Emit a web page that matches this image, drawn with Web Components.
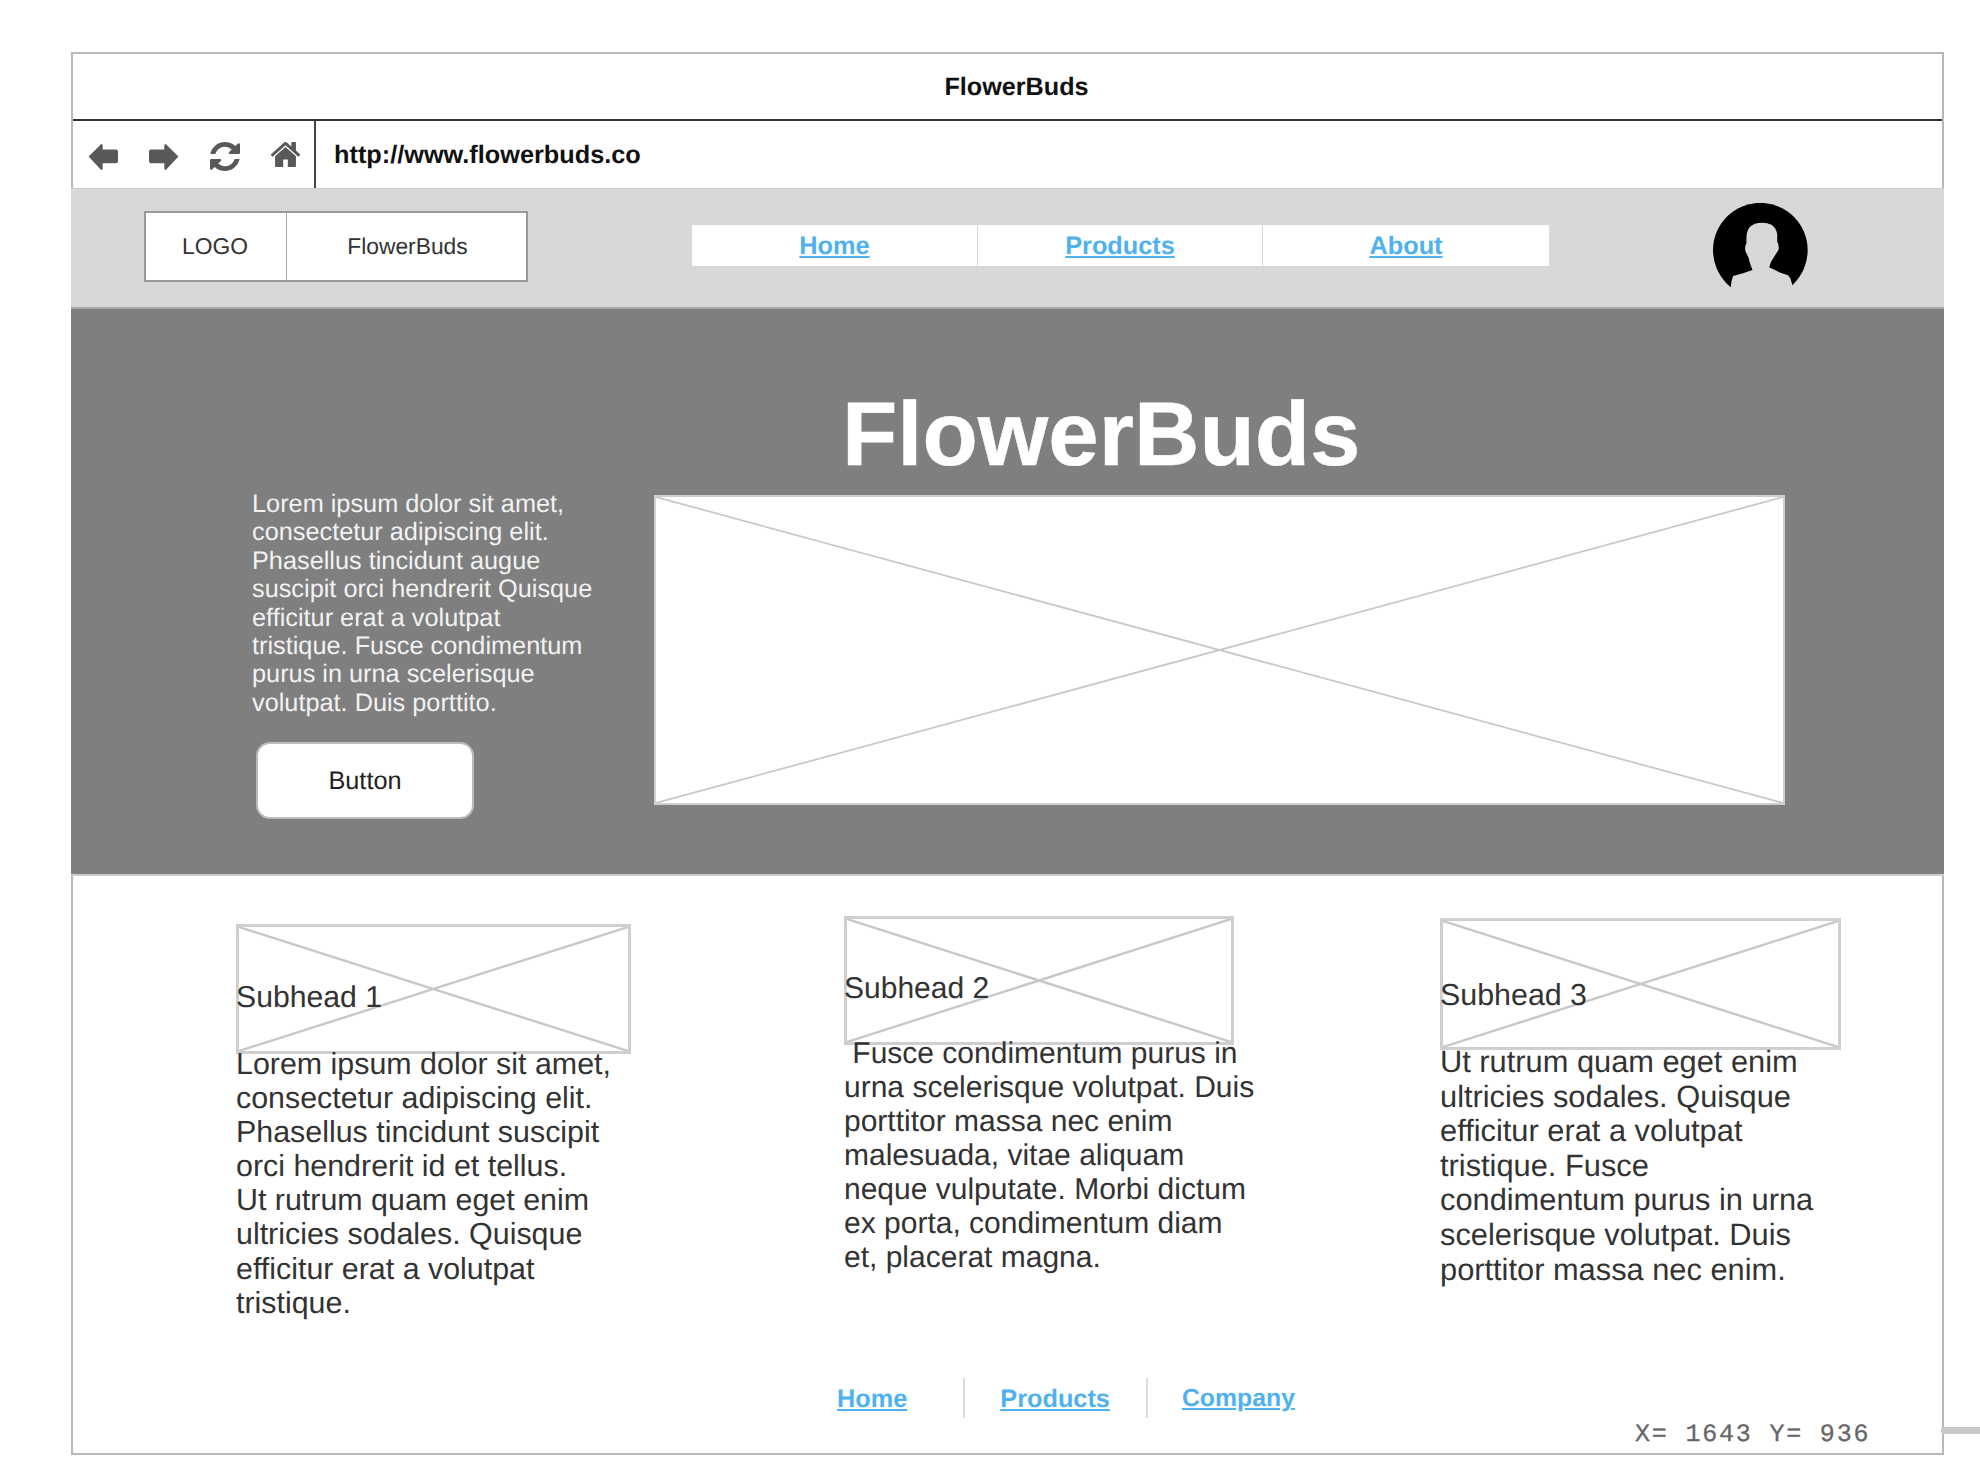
<!DOCTYPE html>
<html>
<head>
<meta charset="utf-8">
<title>FlowerBuds</title>
<style>
    html, body {
        margin: 0;
        padding: 0;
        background: #fff;
        font-family: "Liberation Sans", Arial, sans-serif;
        color: #333;
        text-rendering: geometricPrecision;
    }
    body {
        width: 1980px;
        height: 1470px;
        overflow: hidden;
    }
</style>
</head>
<body>
<browser-frame title-text="FlowerBuds" url="http://www.flowerbuds.co">
    <site-nav></site-nav>
    <hero-banner>
        Lorem ipsum dolor sit amet, consectetur adipiscing elit. Phasellus tincidunt augue suscipit orci hendrerit Quisque efficitur erat a volutpat tristique. Fusce condimentum purus in urna scelerisque volutpat. Duis porttito.
    </hero-banner>
    <card-row>
        <info-card heading="Subhead 1" style="--card-top:48px;--img-w:395px;--img-h:130px;--head-top:57px;--head-size:30.2px;--text-gap:-7px;--text-w:395px;--text-size:30.4px;--text-lh:34.1px">
            Lorem ipsum dolor sit amet, consectetur adipiscing elit. Phasellus tincidunt suscipit orci hendrerit id et tellus.<br>Ut rutrum quam eget enim ultricies sodales. Quisque efficitur erat a volutpat tristique.
        </info-card>
        <info-card heading="Subhead 2" style="--card-top:40px;--img-w:390px;--img-h:129px;--head-top:56px;--head-size:30px;--text-gap:-8px;--text-w:416px;--text-size:30px;--text-lh:34px">
            &nbsp;Fusce condimentum purus in urna scelerisque volutpat. Duis porttitor massa nec enim malesuada, vitae aliquam neque vulputate. Morbi dictum ex porta, condimentum diam et, placerat magna.
        </info-card>
        <info-card heading="Subhead 3" style="--card-top:42px;--img-w:401px;--img-h:132px;--head-top:60px;--head-size:30.4px;--text-gap:-5px;--text-w:385px;--text-size:30.8px;--text-lh:34.6px">
            Ut rutrum quam eget enim ultricies sodales. Quisque efficitur erat a volutpat tristique. Fusce condimentum purus in urna scelerisque volutpat. Duis porttitor massa nec enim.
        </info-card>
    </card-row>
    <site-footer></site-footer>
</browser-frame>

<script>
const ICONS = {
    back: `<svg width="30" height="30" viewBox="0 0 30 30"><path d="M.6 14.6 12 3.2q2.5-2.6 2.7.6v3.6H28q2 0 2 2.2V19q0 2.2-2 2.2H14.7v5q-.2 3.2-2.7.6Z"/></svg>`,
    forward: `<svg width="30" height="30" viewBox="0 0 30 30"><path d="M29.4 14.6 18 3.2q-2.5-2.6-2.7.6v3.6H2q-2 0-2 2.2V19q0 2.2 2 2.2h13.3v5q.2 3.2 2.7.6Z"/></svg>`,
    refresh: `<svg width="30" height="29" viewBox="128 128 1536 1536" preserveAspectRatio="none"><path d="M1639 1056q0 5-1 7-64 268-268 434.5t-478 166.5q-146 0-282.5-55t-243.5-157l-129 129q-19 19-45 19t-45-19-19-45v-448q0-26 19-45t45-19h448q26 0 45 19t19 45-19 45l-137 137q71 66 161 102t187 36q134 0 250-65t186-179q11-17 53-117 8-23 30-23h192q13 0 22.5 9.5t9.5 22.5zm25-800v448q0 26-19 45t-45 19h-448q-26 0-45-19t-19-45 19-45l138-138q-148-137-349-137-134 0-250 65t-186 179q-11 17-53 117-8 23-30 23h-199q-13 0-22.5-9.5t-9.5-22.5v-7q65-268 270-434.5t480-166.5q146 0 284 55.5t245 156.5l130-129q19-19 45-19t45 19 19 45z"/></svg>`,
    home: `<svg width="29" height="25" viewBox="97 254 1598 1282" preserveAspectRatio="none"><path d="M1472 992v480q0 26-19 45t-45 19h-384v-384h-256v384h-384q-26 0-45-19t-19-45v-480q0-1 .5-3t.5-3l575-474 575 474q1 2 1 6zm223-69l-62 74q-8 9-21 11h-3q-13 0-21-7l-692-577-692 577q-12 8-24 7-13-2-21-11l-62-74q-8-10-7-23.5t11-21.5l719-599q32-26 76-26t76 26l244 204v-195q0-14 9-23t23-9h192q14 0 23 9t9 23v408l219 182q10 8 11 21.5t-7 23.5z"/></svg>`
};

class BrowserFrame extends HTMLElement {
    constructor() {
        super();
        this.attachShadow({ mode: 'open' });
    }

    connectedCallback() {
        this.shadowRoot.innerHTML = `
            <style>
                :host {
                    display: block;
                    box-sizing: border-box;
                    position: relative;
                    width: 1873px;
                    height: 1403px;
                    margin: 52px 0 0 71px;
                    border: 2px solid #b8b8b8;
                    background: #fff;
                }
                .title {
                    box-sizing: border-box;
                    height: 67px;
                    border-bottom: 2px solid #333;
                    padding: 1px 0 0 18px;
                    display: flex;
                    align-items: center;
                    justify-content: center;
                    font-size: 25.2px;
                    font-weight: bold;
                    color: #111;
                }
                .address {
                    height: 67px;
                    display: flex;
                }
                .tools {
                    box-sizing: border-box;
                    width: 243px;
                    border-right: 2px solid #444;
                    padding: 21px 0 0 15px;
                    display: flex;
                    align-items: flex-start;
                    gap: 31px;
                    fill: #595959;
                }
                .tools svg { display: block; }
                .url {
                    padding-left: 18px;
                    line-height: 69px;
                    font-size: 25.3px;
                    font-weight: bold;
                    color: #111;
                }
                .coords {
                    position: absolute;
                    left: 1562px;
                    top: 1366px;
                    font: 25px/30px "Liberation Mono", "Courier New", monospace;
                    letter-spacing: 1.8px;
                    -webkit-text-stroke: .3px #666;
                    white-space: pre;
                    color: #666;
                }
                .handle {
                    position: absolute;
                    left: 1868px;
                    top: 1373px;
                    width: 39px;
                    height: 7px;
                    border-radius: 3px 0 0 3px;
                    background: #c8c8c8;
                }
            </style>
            <div class="title">${this.getAttribute('title-text')}</div>
            <div class="address">
                <div class="tools">${ICONS.back}${ICONS.forward}${ICONS.refresh}${ICONS.home}</div>
                <div class="url">${this.getAttribute('url')}</div>
            </div>
            <slot></slot>
            <div class="coords">X= 1643 Y= 936</div>
            <div class="handle"></div>
        `;
    }
}

class WireImage extends HTMLElement {
    constructor() {
        super();
        this.attachShadow({ mode: 'open' });
        this.shadowRoot.innerHTML = `
            <style>
                :host {
                    display: block;
                    box-sizing: border-box;
                    border: var(--frame-w, 3px) solid #cfcfcf;
                    background: #fff;
                }
                svg {
                    display: block;
                    width: 100%;
                    height: 100%;
                }
                line {
                    stroke: #c8c8c8;
                    stroke-width: var(--line-w, 2.4);
                    vector-effect: non-scaling-stroke;
                }
            </style>
            <svg viewBox="0 0 100 100" preserveAspectRatio="none">
                <line x1="0" y1="0" x2="100" y2="100"></line>
                <line x1="100" y1="0" x2="0" y2="100"></line>
            </svg>
        `;
    }
}

class SiteNav extends HTMLElement {
    constructor() {
        super();
        this.attachShadow({ mode: 'open' });
        this.shadowRoot.innerHTML = `
            <style>
                :host {
                    display: flex;
                    align-items: flex-start;
                    box-sizing: border-box;
                    height: 121px;
                    margin: 0 -2px;
                    padding-left: 73px;
                    background: #d8d8d8;
                    border-top: 1px solid #ccc;
                    border-bottom: 2px solid #a8a8a8;
                }
                .logo {
                    box-sizing: border-box;
                    width: 384px;
                    height: 71px;
                    margin-top: 22px;
                    display: flex;
                    border: 2px solid #999;
                    background: #fff;
                    font-size: 22.8px;
                    color: #333;
                }
                .logo div {
                    display: flex;
                    align-items: center;
                    justify-content: center;
                }
                .logo .mark {
                    box-sizing: border-box;
                    width: 141px;
                    padding-right: 2px;
                    border-right: 1px solid #aaa;
                }
                .logo .name {
                    flex: 1;
                    padding-left: 2px;
                }
                .menu {
                    width: 857px;
                    height: 41px;
                    margin: 36px 0 0 164px;
                    display: grid;
                    grid-template-columns: 285px 285px 1fr;
                    background: #fff;
                    font-size: 25.3px;
                    font-weight: bold;
                }
                .menu a {
                    display: flex;
                    align-items: center;
                    justify-content: center;
                    padding-top: 1px;
                    color: #4fb1ee;
                    border-left: 1px solid #d8d8d8;
                }
                .menu a:first-child { border-left: 0; }
                .avatar {
                    display: block;
                    margin: 14px 0 0 164px;
                }
            </style>
            <div class="logo"><div class="mark">LOGO</div><div class="name">FlowerBuds</div></div>
            <nav class="menu">
                <a href="#">Home</a>
                <a href="#">Products</a>
                <a href="#">About</a>
            </nav>
            <svg class="avatar" width="95" height="87" viewBox="100 40 284 260">
                <circle cx="241.5" cy="181" r="141.5" fill="#000"></circle>
                <path fill="#d8d8d8" d="M248 99Q222 99 210 112Q200 124 200 145L200 160Q194 170 197 184L207 205L209 215Q213 228 218 240L190 250L160 258Q154 272 153 292L153 340L345 340L337 292Q336 268 324 256L300 248L268 232Q272 215 280 205L296 180Q298 165 292 155L292 135Q290 115 275 105Q262 99 248 99Z"></path>
            </svg>
        `;
    }
}

class HeroBanner extends HTMLElement {
    constructor() {
        super();
        this.attachShadow({ mode: 'open' });
        this.shadowRoot.innerHTML = `
            <style>
                :host {
                    display: block;
                    box-sizing: border-box;
                    height: 567px;
                    margin: 0 -2px;
                    padding-top: 81px;
                    background: #7f7f7f;
                    border-bottom: 2px solid #ccc;
                    --line-w: 1.7;
                    --frame-w: 2px;
                }
                h1 {
                    margin: 0 0 9px 771px;
                    font-size: 90.6px;
                    line-height: 90px;
                    font-weight: bold;
                    color: #fff;
                    -webkit-text-stroke: .4px #fff;
                }
                .row {
                    display: flex;
                    align-items: flex-start;
                    padding-left: 181px;
                }
                .copy {
                    width: 346px;
                    margin-right: 56px;
                    padding-top: 1px;
                }
                p {
                    margin: 0;
                    font-size: 25.3px;
                    line-height: 28.4px;
                    color: #f2f2f2;
                }
                button {
                    display: block;
                    box-sizing: border-box;
                    width: 218px;
                    height: 77px;
                    margin: 25px 0 0 4px;
                    padding: 2px 0 0;
                    border: 2px solid #bbb;
                    border-radius: 14px;
                    background: #fff;
                    font: 25.3px "Liberation Sans", Arial, sans-serif;
                    text-rendering: geometricPrecision;
                    color: #222;
                }
                wire-image {
                    width: 1131px;
                    height: 310px;
                    margin-top: 6px;
                }
            </style>
            <h1>FlowerBuds</h1>
            <div class="row">
                <div class="copy">
                    <p><slot></slot></p>
                    <button>Button</button>
                </div>
                <wire-image></wire-image>
            </div>
        `;
    }
}

class CardRow extends HTMLElement {
    constructor() {
        super();
        this.attachShadow({ mode: 'open' });
        this.shadowRoot.innerHTML = `
            <style>
                :host {
                    display: grid;
                    grid-template-columns: 608px 596px 1fr;
                    align-items: start;
                    box-sizing: border-box;
                    height: 502px;
                    padding-left: 163px;
                }
            </style>
            <slot></slot>
        `;
    }
}

class InfoCard extends HTMLElement {
    constructor() {
        super();
        this.attachShadow({ mode: 'open' });
    }

    connectedCallback() {
        this.shadowRoot.innerHTML = `
            <style>
                :host {
                    display: block;
                    position: relative;
                    margin-top: var(--card-top);
                    color: #333;
                }
                wire-image {
                    width: var(--img-w);
                    height: var(--img-h);
                }
                h2 {
                    position: absolute;
                    left: 0;
                    top: var(--head-top);
                    margin: 0;
                    font-size: var(--head-size);
                    font-weight: normal;
                    line-height: 34px;
                }
                p {
                    width: var(--text-w);
                    margin: var(--text-gap) 0 0;
                    position: relative;
                    font-size: var(--text-size);
                    line-height: var(--text-lh);
                }
            </style>
            <wire-image></wire-image>
            <h2>${this.getAttribute('heading')}</h2>
            <p><slot></slot></p>
        `;
    }
}

class SiteFooter extends HTMLElement {
    constructor() {
        super();
        this.attachShadow({ mode: 'open' });
        this.shadowRoot.innerHTML = `
            <style>
                :host {
                    display: flex;
                    height: 40px;
                    padding-left: 764px;
                    font-size: 25.3px;
                    font-weight: bold;
                    line-height: 42px;
                }
                a { color: #4fb1ee; }
                a:last-child { font-size: 24.8px; }
                i {
                    width: 2px;
                    background: #ddd;
                    margin: 0 35px 0 56px;
                }
                i + a + i { margin: 0 34px 0 36px; }
            </style>
            <a href="#">Home</a><i></i><a href="#">Products</a><i></i><a href="#">Company</a>
        `;
    }
}

customElements.define('wire-image', WireImage);
customElements.define('browser-frame', BrowserFrame);
customElements.define('site-nav', SiteNav);
customElements.define('hero-banner', HeroBanner);
customElements.define('card-row', CardRow);
customElements.define('info-card', InfoCard);
customElements.define('site-footer', SiteFooter);
</script>
</body>
</html>
